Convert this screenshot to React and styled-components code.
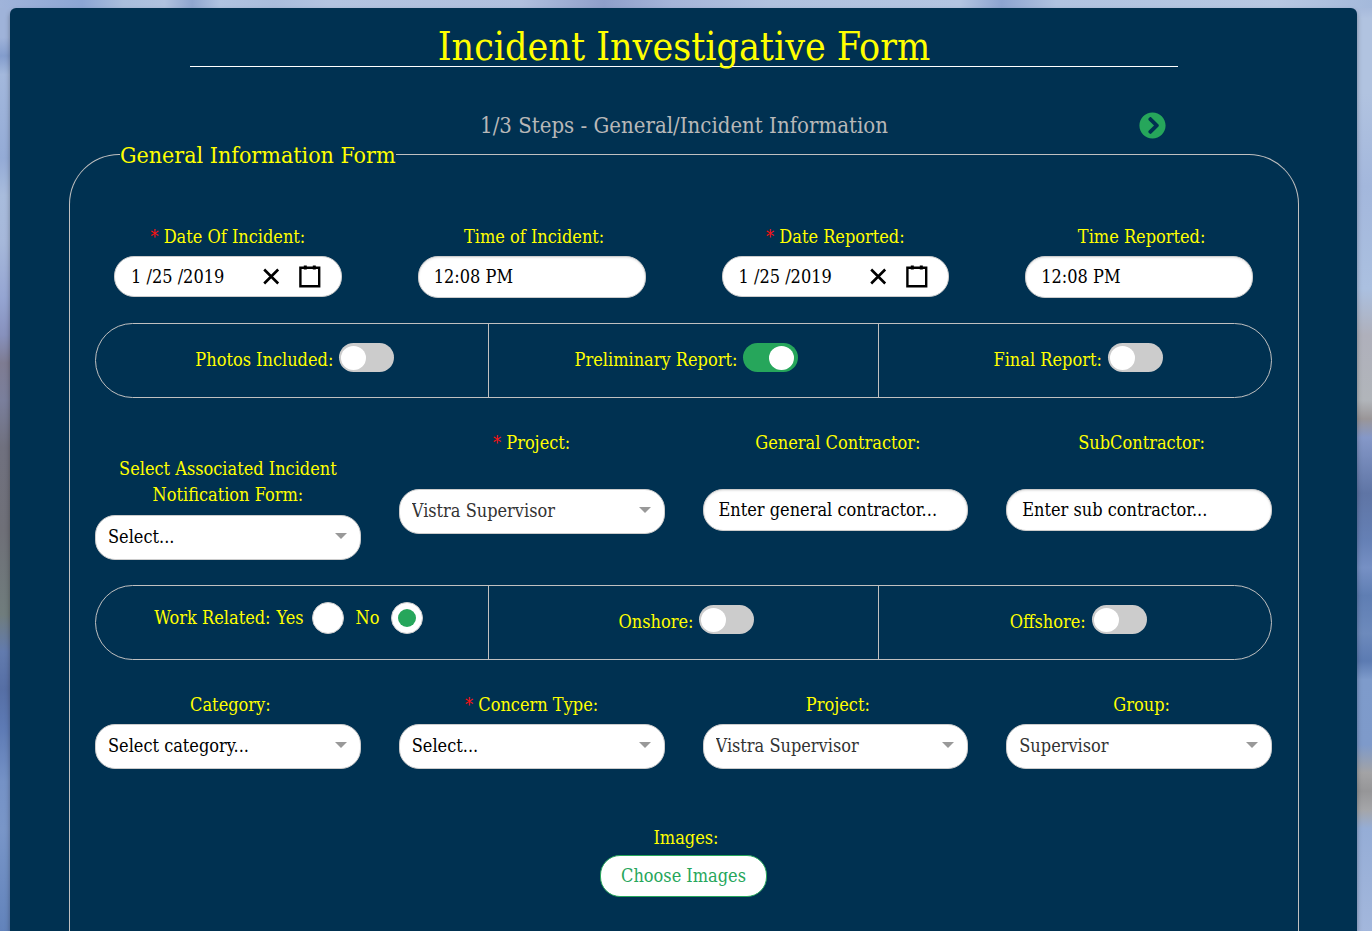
import React, { useState } from "react";
import styled, { createGlobalStyle, css } from "styled-components";
import { FaChevronCircleRight } from "react-icons/fa";

const navy = "#003151";
const yellow = "#ffff00";
const green = "#26a65b";
const silver = "#c0c0c0";

const GlobalStyle = createGlobalStyle`
  *, *::before, *::after { box-sizing: border-box; }
  body { margin: 0; }
  body, input, select, button {
    font-family: "DejaVu Serif Condensed", "DejaVu Serif", serif;
    font-size: 18px;
  }
`;

const Page = styled.div`
  min-height: 100vh;
  display: flex;
  padding: 8px 15px 0 10px;
  background:
    linear-gradient(to right, #a0b4da 0%, #8ca6d4 6%, #a9bedc 9%, #b0c2df 12%, #8fa6cf 14%, #b0c3e0 16%, #aabddc 20%, #b3c4e0 24%, #b0c0de 38%, #8f9fca 44%, #a5b5d9 49%, #b0c2df 56%, #b3c5e1 70%, #8da4d0 73%, #b0c3e0 77%, #b7c8e2 93%, #a4b9db 100%) top / 100% 8px no-repeat,
    linear-gradient(#9fb3d9 0%, #9fb3d9 4%, #839dcd 6%, #a3b8dc 8%, #94abd6 17%, #a8bcdc 21%, #a6b8da 26%, #95a5d2 32%, #8791bd 36%, #7e7c92 39%, #7a7f9c 43%, #70717f 48%, #6f7078 57%, #707d7d 66%, #627bae 70%, #566fa5 74%, #5d7ab4 78%, #7592c6 84%, #7996c8 89%, #6283bb 100%) left / 50% 100% no-repeat,
    linear-gradient(#9fb3d8 0%, #b1c3e0 2%, #b1c3e0 10%, #a3b7dc 20%, #abc0e0 31%, #afb0bb 36%, #b1b5ba 43%, #9a9698 45%, #8598c8 47%, #5f75a5 53%, #6580b5 58%, #7690c4 61%, #5f7eb3 64%, #6d8abc 68%, #5c7bb2 71%, #7e9bcb 73%, #7e9aca 80%, #a3a3a5 83%, #969698 85%, #a5a6a9 87%, #95add6 89%, #a3b7dc 100%) right / 50% 100% no-repeat;
`;

const Card = styled.main`
  flex: 1;
  min-width: 0;
  display: flex;
  flex-direction: column;
  padding: 18px 58px 0 59px;
  border-radius: 6px 6px 0 0;
  background: ${navy};
  box-shadow: 0 3px 5px rgba(0, 0, 0, 0.35);
`;

const Title = styled.h1`
  margin: 0 121px;
  padding-top: 2px;
  border-bottom: 1px solid #fff;
  color: ${yellow};
  font-size: 39px;
  font-weight: 400;
  line-height: 38px;
  text-align: center;
`;

const StepBar = styled.div`
  display: grid;
  grid-template-columns: 1fr auto 1fr;
  align-items: center;
  margin-top: 45px;
  padding: 0 133px;
`;

const StepText = styled.h2`
  grid-column: 2;
  margin: 0;
  color: #b8b8b8;
  font-size: 22px;
  font-weight: 400;
  line-height: 27px;
`;

const NextButton = styled.button`
  justify-self: end;
  display: flex;
  padding: 0;
  border: 0;
  background: none;
  color: ${green};
  font-size: 27px;
`;

const Section = styled.fieldset`
  flex: 1;
  min-width: 0;
  margin: 0;
  padding: 54px 26px 32px 25px;
  border: 1px solid ${silver};
  border-bottom: 0;
  border-radius: 50px 50px 0 0;
`;

const Legend = styled.legend`
  margin-left: 25px;
  padding: 2px 0 0;
  color: ${yellow};
  font-size: 23px;
  line-height: 29px;
`;

const FieldRow = styled.div`
  display: grid;
  grid-template-columns: repeat(4, minmax(0, 1fr));
  column-gap: 38px;
  align-items: start;
`;

const Field = styled.div`
  display: flex;
  flex-direction: column;
  gap: ${(p) => (p.$tall ? 7 : 6)}px;
  padding: ${(p) => (p.$lowered ? "26px" : "0")} ${(p) => (p.$inset ? "19px" : "0")} 0;
`;

const Label = styled.label`
  min-height: ${(p) => (p.$tall ? 52 : 26)}px;
  padding-left: ${(p) => (p.$required || p.$wrap ? 0 : 5)}px;
  color: ${yellow};
  line-height: 26px;
  text-align: center;
`;

const Star = styled.span`
  color: #ff1010;
`;

const pill = css`
  width: 100%;
  border: 1px solid #ccc;
  border-radius: 20px;
  background: #fff;
  color: #000;
`;

const TextInput = styled.input`
  ${pill}
  height: 42px;
  padding: 0 15px 2px;
  box-shadow: inset 0 1px 2px rgba(0, 0, 0, 0.1);
  &::placeholder { color: #000; opacity: 1; }
`;

const DateBox = styled.div`
  ${pill}
  display: flex;
  align-items: center;
  height: 41px;
  padding: 0 20px 0 16px;
`;

const DateInput = styled.input`
  flex: 1;
  min-width: 0;
  padding: 0;
  border: 0;
  background: none;
  color: #000;
`;

const IconButton = styled.button`
  display: flex;
  margin-left: 19px;
  padding: 0;
  border: 0;
  background: none;
  color: #000;
`;

const SelectWrap = styled.div`
  display: grid;
  align-items: center;
  & > * { grid-area: 1 / 1; }
  &::after {
    content: "";
    grid-area: 1 / 1;
    justify-self: end;
    margin: 0 14px 3px 0;
    border: 6px solid transparent;
    border-top-color: #999;
    border-bottom: 0;
    pointer-events: none;
  }
`;

const SelectInput = styled.select`
  ${pill}
  height: 45px;
  padding: 0 32px 2px 12px;
  appearance: none;
  color: ${(p) => (p.$chosen ? "#333" : "#000")};
`;

const OptionBar = styled.div`
  display: grid;
  grid-template-columns: repeat(3, minmax(0, 1fr));
  min-height: 75px;
  margin: 25px 0 32px;
  border: 1px solid ${silver};
  border-radius: 38px;
`;

const OptionCell = styled.div`
  display: flex;
  justify-content: center;
  align-items: flex-start;
  padding: ${(p) => (p.$radios ? "16px 6px 0 0" : "19px 0 0 6px")};
  &:nth-child(2) {
    border-left: 1px solid ${silver};
    border-right: 1px solid ${silver};
  }
`;

const ToggleLabel = styled.label`
  padding: 4px 6px 0 0;
  color: ${yellow};
  line-height: 26px;
`;

const Switch = styled.input`
  appearance: none;
  width: 55px;
  height: 29px;
  margin: 0;
  padding: 3px 2px 0;
  border-radius: 15px;
  background: #ccc;
  &::before {
    content: "";
    display: block;
    width: 25px;
    height: 24px;
    border-radius: 50%;
    background: #fff;
  }
  &:checked { background: ${green}; padding-left: 26px; }
`;

const RadioGroup = styled.div`
  display: flex;
  align-items: center;
  color: ${yellow};
  line-height: 26px;
`;

const RadioLabel = styled.label`
  display: flex;
  align-items: center;
  gap: ${(p) => p.$gap}px;
  margin-left: ${(p) => p.$space}px;
`;

const Radio = styled.input`
  appearance: none;
  display: grid;
  place-items: center;
  width: 32px;
  height: 32px;
  margin: 0;
  border: 1px solid #ccc;
  border-radius: 50%;
  background: #fff;
  &:checked::before {
    content: "";
    width: 18px;
    height: 18px;
    border-radius: 50%;
    background: ${green};
  }
`;

const ImagesBlock = styled.div`
  display: flex;
  flex-direction: column;
  align-items: center;
  gap: 4px;
  margin-top: 56px;
`;

const ImagesButton = styled.button`
  height: 42px;
  padding: 0 20px 2px;
  border: 1px solid ${green};
  border-radius: 20px;
  background: #fff;
  color: ${green};
`;

function FieldLabel({ id, text, ...rest }) {
  return (
    <Label htmlFor={id} {...rest}>
      {rest.$required && <Star>* </Star>}
      {text}
    </Label>
  );
}

function DateField({ id, label }) {
  const [value, setValue] = useState("1 /25 /2019");
  return (
    <Field $inset>
      <FieldLabel id={id} text={label} $required />
      <DateBox>
        <DateInput id={id} value={value} onChange={(e) => setValue(e.target.value)} />
        <IconButton type="button" aria-label="Clear date" onClick={() => setValue("")}>
          <svg width="17" height="17" viewBox="0 0 17 17" fill="none" stroke="currentColor" strokeWidth="2.6">
            <path d="M1.2 1.5l14 14M15.2 1.5l-14 14" />
          </svg>
        </IconButton>
        <IconButton type="button" aria-label="Open calendar">
          <svg width="22" height="24" viewBox="0 0 22 24" fill="none" stroke="currentColor">
            <path strokeWidth="2.4" d="M1.4 2.8h18.8v18.4H1.4z" />
            <path strokeWidth="3" d="M6.3 0.6v4M15.3 0.6v4" />
          </svg>
        </IconButton>
      </DateBox>
    </Field>
  );
}

function TimeField({ id, label }) {
  return (
    <Field $inset>
      <FieldLabel id={id} text={label} />
      <TextInput id={id} defaultValue="12:08 PM" />
    </Field>
  );
}

function SelectField({ id, label, value, chosen, required, tall, wrap }) {
  return (
    <Field $tall={tall} $lowered={wrap}>
      <FieldLabel id={id} text={label} $required={required} $tall={tall} $wrap={wrap} />
      <SelectWrap>
        <SelectInput id={id} $chosen={chosen}>
          <option>{value}</option>
        </SelectInput>
      </SelectWrap>
    </Field>
  );
}

function TextField({ id, label, placeholder }) {
  return (
    <Field $tall>
      <FieldLabel id={id} text={label} $tall />
      <TextInput id={id} placeholder={placeholder} />
    </Field>
  );
}

function ToggleCell({ id, label, on }) {
  return (
    <OptionCell>
      <ToggleLabel htmlFor={id}>{label}</ToggleLabel>
      <Switch id={id} type="checkbox" role="switch" defaultChecked={on} />
    </OptionCell>
  );
}

export default function App() {
  return (
    <Page>
      <GlobalStyle />
      <Card>
        <Title>Incident Investigative Form</Title>
        <StepBar>
          <StepText>1/3 Steps - General/Incident Information</StepText>
          <NextButton type="button" aria-label="Next step">
            <FaChevronCircleRight />
          </NextButton>
        </StepBar>
        <Section>
          <Legend>General Information Form</Legend>
          <FieldRow>
            <DateField id="incident-date" label="Date Of Incident:" />
            <TimeField id="incident-time" label="Time of Incident:" />
            <DateField id="reported-date" label="Date Reported:" />
            <TimeField id="reported-time" label="Time Reported:" />
          </FieldRow>
          <OptionBar>
            <ToggleCell id="photos" label="Photos Included:" />
            <ToggleCell id="preliminary" label="Preliminary Report:" on />
            <ToggleCell id="final" label="Final Report:" />
          </OptionBar>
          <FieldRow>
            <SelectField id="notification" label="Select Associated Incident Notification Form:" value="Select..." tall wrap />
            <SelectField id="project" label="Project:" value="Vistra Supervisor" chosen required tall />
            <TextField id="contractor" label="General Contractor:" placeholder="Enter general contractor..." />
            <TextField id="subcontractor" label="SubContractor:" placeholder="Enter sub contractor..." />
          </FieldRow>
          <OptionBar>
            <OptionCell $radios>
              <RadioGroup role="radiogroup" aria-labelledby="work-related">
                <span id="work-related">Work Related:</span>
                <RadioLabel $gap={8} $space={6}>
                  Yes
                  <Radio type="radio" name="work" />
                </RadioLabel>
                <RadioLabel $gap={12} $space={12}>
                  No
                  <Radio type="radio" name="work" defaultChecked />
                </RadioLabel>
              </RadioGroup>
            </OptionCell>
            <ToggleCell id="onshore" label="Onshore:" />
            <ToggleCell id="offshore" label="Offshore:" />
          </OptionBar>
          <FieldRow>
            <SelectField id="category" label="Category:" value="Select category..." />
            <SelectField id="concern" label="Concern Type:" value="Select..." required />
            <SelectField id="group-project" label="Project:" value="Vistra Supervisor" chosen />
            <SelectField id="group" label="Group:" value="Supervisor" chosen />
          </FieldRow>
          <ImagesBlock>
            <Label htmlFor="images">Images:</Label>
            <ImagesButton id="images" type="button">Choose Images</ImagesButton>
          </ImagesBlock>
        </Section>
      </Card>
    </Page>
  );
}
